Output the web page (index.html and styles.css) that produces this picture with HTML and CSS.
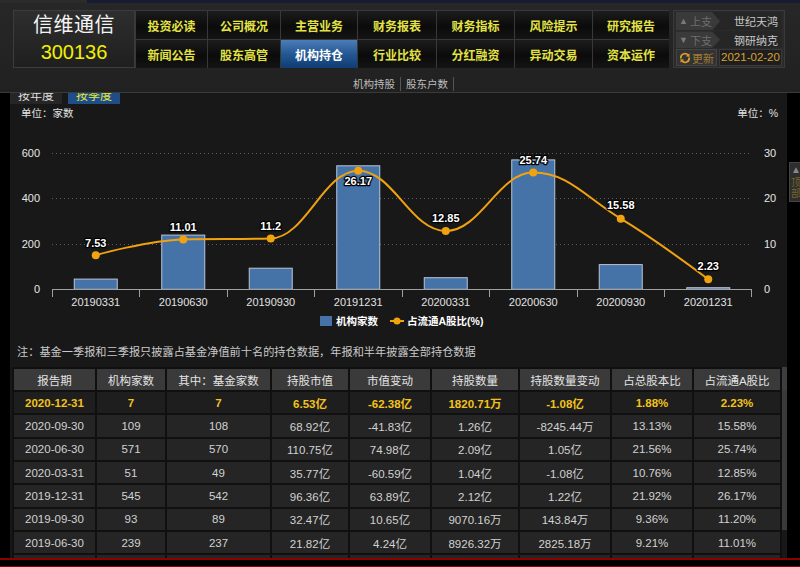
FILE: index.html
```html
<!DOCTYPE html>
<html lang="zh-CN">
<head>
<meta charset="utf-8">
<title>信维通信 300136 机构持仓</title>
<link rel="stylesheet" href="styles.css">
</head>
<body>
<div class="topstrip"></div>
<header class="hdr">
  <div class="hdr-row">
    <div class="logo">
      <div class="name">信维通信</div>
      <div class="code">300136</div>
    </div>
    <nav class="nav">
      <a class="cell">投资必读</a>
      <a class="cell">公司概况</a>
      <a class="cell">主营业务</a>
      <a class="cell">财务报表</a>
      <a class="cell">财务指标</a>
      <a class="cell">风险提示</a>
      <a class="cell">研究报告</a>
      <a class="cell">新闻公告</a>
      <a class="cell">股东高管</a>
      <a class="cell active">机构持仓</a>
      <a class="cell">行业比较</a>
      <a class="cell">分红融资</a>
      <a class="cell">异动交易</a>
      <a class="cell">资本运作</a>
    </nav>
    <div class="side">
      <div class="srow">
        <span class="lab"><span class="tri">▲</span>上支</span>
        <span class="val">世纪天鸿</span>
      </div>
      <div class="srow">
        <span class="lab"><span class="tri">▼</span>下支</span>
        <span class="val">钢研纳克</span>
      </div>
      <div class="srow upd">
        <span class="ulab">
          <svg class="ricon" width="12" height="12" viewBox="0 0 12 12"><path d="M2 6.5A4 4 0 0 1 9.2 3.4" fill="none" stroke="#d99a2b" stroke-width="1.8"/><path d="M10.6 1.2 10.4 5 6.8 4.2Z" fill="#d99a2b"/><path d="M10 5.5A4 4 0 0 1 2.8 8.6" fill="none" stroke="#d99a2b" stroke-width="1.8"/><path d="M1.4 10.8 1.6 7 5.2 7.8Z" fill="#d99a2b"/></svg>更新</span>
        <span class="date">2021-02-20</span>
      </div>
    </div>
  </div>
  <div class="subnav">
    <span class="sn">机构持股</span><span class="sn">股东户数</span>
  </div>
</header>
<div class="wrap">
  <div class="lbar"></div>
  <main class="main">
    <div class="tabs">
      <span class="tab">按年度</span>
      <span class="tab on">按季度</span>
    </div>
    <div class="units"><span>单位：家数</span><span>单位：%</span></div>
    <svg class="chart" width="777" height="218" viewBox="10 122 777 218">
      <g class="grid">
        <line x1="52" y1="153.5" x2="751" y2="153.5"/>
        <line x1="52" y1="198.5" x2="751" y2="198.5"/>
        <line x1="52" y1="244.5" x2="751" y2="244.5"/>
      </g>
      <g class="ylab">
        <text x="40" y="157" text-anchor="end">600</text>
        <text x="40" y="202" text-anchor="end">400</text>
        <text x="40" y="248" text-anchor="end">200</text>
        <text x="40" y="293" text-anchor="end">0</text>
        <text x="764" y="157">30</text>
        <text x="764" y="202">20</text>
        <text x="764" y="248">10</text>
        <text x="764" y="293">0</text>
      </g>
      <g class="bars">
        <rect x="74.25" y="279.1" width="43" height="10.2"/>
        <rect x="161.75" y="235.1" width="43" height="54.2"/>
        <rect x="249.25" y="268.2" width="43" height="21.1"/>
        <rect x="336.75" y="165.8" width="43" height="123.5"/>
        <rect x="424.25" y="277.7" width="43" height="11.6"/>
        <rect x="511.75" y="159.9" width="43" height="129.4"/>
        <rect x="599.25" y="264.6" width="43" height="24.7"/>
        <rect x="686.75" y="287.7" width="43" height="1.6"/>
      </g>
      <g class="axis">
        <line x1="52" y1="289.5" x2="752" y2="289.5"/>
        <line x1="52.5" y1="289.5" x2="52.5" y2="297"/>
        <line x1="139.5" y1="289.5" x2="139.5" y2="297"/>
        <line x1="227.5" y1="289.5" x2="227.5" y2="297"/>
        <line x1="314.5" y1="289.5" x2="314.5" y2="297"/>
        <line x1="402.5" y1="289.5" x2="402.5" y2="297"/>
        <line x1="489.5" y1="289.5" x2="489.5" y2="297"/>
        <line x1="577.5" y1="289.5" x2="577.5" y2="297"/>
        <line x1="664.5" y1="289.5" x2="664.5" y2="297"/>
        <line x1="751.5" y1="289.5" x2="751.5" y2="297"/>
      </g>
      <g class="xlab">
        <text x="95.75" y="306">20190331</text>
        <text x="183.25" y="306">20190630</text>
        <text x="270.75" y="306">20190930</text>
        <text x="358.25" y="306">20191231</text>
        <text x="445.75" y="306">20200331</text>
        <text x="533.25" y="306">20200630</text>
        <text x="620.75" y="306">20200930</text>
        <text x="708.25" y="306">20201231</text>
      </g>
      <path class="line" d="M95.75 255.2C95.75 255.2 148.25 240.3 183.25 239.4C218.25 238.5 235.75 239.4 270.75 238.5C305.75 237.6 323.25 170.7 358.25 170.7C393.25 170.7 410.75 231 445.75 231C480.75 231 498.25 172.6 533.25 172.6C568.25 172.6 585.75 197.38 620.75 218.7C655.75 240.02 708.25 279.2 708.25 279.2"/>
      <g class="dots">
        <circle cx="95.75" cy="255.2" r="4"/>
        <circle cx="183.25" cy="239.4" r="4"/>
        <circle cx="270.75" cy="238.5" r="4"/>
        <circle cx="358.25" cy="170.7" r="4"/>
        <circle cx="445.75" cy="231" r="4"/>
        <circle cx="533.25" cy="172.6" r="4"/>
        <circle cx="620.75" cy="218.7" r="4"/>
        <circle cx="708.25" cy="279.2" r="4"/>
      </g>
      <g class="dlab">
        <text x="95.75" y="246.5">7.53</text>
        <text x="183.25" y="230.5">11.01</text>
        <text x="270.75" y="230">11.2</text>
        <text x="358.25" y="184.5">26.17</text>
        <text x="445.75" y="222">12.85</text>
        <text x="533.25" y="164">25.74</text>
        <text x="620.75" y="209">15.58</text>
        <text x="708.25" y="269.5">2.23</text>
      </g>
      <g class="legend">
        <rect x="320" y="316" width="12" height="10"/>
        <text x="336" y="325">机构家数</text>
        <line x1="390" y1="321" x2="404" y2="321"/>
        <circle cx="397" cy="321" r="3.5"/>
        <text x="407" y="325">占流通A股比(%)</text>
      </g>
    </svg>
    <p class="note">注：基金一季报和三季报只披露占基金净值前十名的持仓数据，年报和半年披露全部持仓数据</p>
    <div class="tblwrap">
      <table class="tbl">
        <colgroup>
          <col style="width:83px"><col style="width:70px"><col style="width:105px"><col style="width:78px"><col style="width:82px"><col style="width:88px"><col style="width:92px"><col style="width:82px"><col style="width:88px">
        </colgroup>
        <thead>
          <tr><th>报告期</th><th>机构家数</th><th>其中：基金家数</th><th>持股市值</th><th>市值变动</th><th>持股数量</th><th>持股数量变动</th><th>占总股本比</th><th>占流通A股比</th></tr>
        </thead>
        <tbody>
          <tr class="hl"><td>2020-12-31</td><td>7</td><td>7</td><td>6.53亿</td><td>-62.38亿</td><td>1820.71万</td><td>-1.08亿</td><td>1.88%</td><td>2.23%</td></tr>
          <tr><td>2020-09-30</td><td>109</td><td>108</td><td>68.92亿</td><td>-41.83亿</td><td>1.26亿</td><td>-8245.44万</td><td>13.13%</td><td>15.58%</td></tr>
          <tr><td>2020-06-30</td><td>571</td><td>570</td><td>110.75亿</td><td>74.98亿</td><td>2.09亿</td><td>1.05亿</td><td>21.56%</td><td>25.74%</td></tr>
          <tr><td>2020-03-31</td><td>51</td><td>49</td><td>35.77亿</td><td>-60.59亿</td><td>1.04亿</td><td>-1.08亿</td><td>10.76%</td><td>12.85%</td></tr>
          <tr><td>2019-12-31</td><td>545</td><td>542</td><td>96.36亿</td><td>63.89亿</td><td>2.12亿</td><td>1.22亿</td><td>21.92%</td><td>26.17%</td></tr>
          <tr><td>2019-09-30</td><td>93</td><td>89</td><td>32.47亿</td><td>10.65亿</td><td>9070.16万</td><td>143.84万</td><td>9.36%</td><td>11.20%</td></tr>
          <tr><td>2019-06-30</td><td>239</td><td>237</td><td>21.82亿</td><td>4.24亿</td><td>8926.32万</td><td>2825.18万</td><td>9.21%</td><td>11.01%</td></tr>
          <tr><td>2019-03-31</td><td>45</td><td>43</td><td>7.83亿</td><td>-1.36亿</td><td>3203.52万</td><td>-5862.45万</td><td>3.31%</td><td>7.53%</td></tr>
        </tbody>
      </table>
      <div class="scroll"><div class="sh"></div><div class="thumb"></div></div>
    </div>
  </main>
  <div class="rbar">
    <div class="totop"><span class="arr">▲</span><span class="tt">顶部</span></div>
  </div>
</div>
<div class="foot"></div>
</body>
</html>
```

FILE: styles.css
```css
html, body {
  margin: 0;
  padding: 0;
}
body {
  width: 800px;
  height: 567px;
  overflow: hidden;
  background: #000;
  font-family: "Liberation Sans", "Noto Sans CJK SC", sans-serif;
}
.topstrip {
  height: 3px;
  background: linear-gradient(to right, #2b2b2b 87px, #171b33 87px);
}
.hdr {
  height: 90px;
  box-sizing: border-box;
  background: linear-gradient(#272727, #212121);
  border-bottom: 1px solid #3a3a3a;
}
.hdr-row {
  display: flex;
  padding: 7px 0 0 13px;
  height: 58px;
}
.logo {
  width: 122px;
  height: 58px;
  box-sizing: border-box;
  border: 1px solid #3c3c3c;
  background: linear-gradient(#2e2e2e, #1f1f1f);
  display: flex;
  flex-direction: column;
  align-items: center;
  justify-content: center;
}
.logo .name {
  font-size: 20px;
  line-height: 27px;
  color: #f4f4f4;
  letter-spacing: 0.5px;
}
.logo .code {
  font-size: 20px;
  line-height: 27px;
  color: #f2f000;
}
.nav {
  display: grid;
  grid-template-columns: 72px 73px 77px 79px 78px 78px 77px;
  grid-template-rows: 29px 29px;
  height: 58px;
}
.cell {
  display: flex;
  align-items: center;
  justify-content: center;
  box-sizing: border-box;
  border-left: 1px solid #383838;
  border-top: 1px solid #383838;
  background: linear-gradient(#1c1c1c, #0b0b0b 55%, #141414);
  color: #e3e346;
  font-size: 12px;
  font-weight: bold;
}
.cell.active {
  background: linear-gradient(#4c7db9, #235894 50%, #0f3c74);
  color: #ffffff;
}
.side {
  margin-left: 4px;
  width: 112px;
  height: 58px;
  box-sizing: border-box;
  border: 1px solid #3a3a3a;
  background: #2b2b2b;
  padding: 1px 2px;
  display: flex;
  flex-direction: column;
  gap: 1px;
}
.srow {
  display: flex;
  align-items: center;
  justify-content: space-between;
  height: 18px;
  background: #262626;
}
.srow:first-child {
  height: 20px;
}
.lab {
  display: flex;
  align-items: center;
  width: 44px;
  height: 100%;
  padding-left: 3px;
  box-sizing: border-box;
  background: #3a3a3a;
  clip-path: polygon(0 0, 82% 0, 100% 50%, 82% 100%, 0 100%);
  color: #6d6d6d;
  font-size: 11px;
}
.tri {
  font-size: 9px;
  color: #7a7a7a;
  margin-right: 2px;
}
.val {
  color: #c6c6c6;
  font-size: 11px;
  padding-right: 4px;
}
.upd {
  height: 17px;
  background: #2b2b2b;
  gap: 2px;
}
.ulab {
  display: flex;
  align-items: center;
  gap: 1px;
  height: 100%;
  padding: 0 2px;
  background: #333;
  border: 1px solid #444;
  box-sizing: border-box;
  color: #a27b34;
  font-size: 11px;
}
.ricon {
  display: block;
}
.date {
  flex: 1;
  height: 100%;
  box-sizing: border-box;
  background: #1e1e1e;
  border: 1px solid #3a3a3a;
  color: #dba134;
  font-size: 11.5px;
  line-height: 15px;
  text-align: center;
}
.subnav {
  display: flex;
  justify-content: center;
  margin-top: 9px;
  height: 14px;
  padding-left: 2px;
}
.sn {
  font-size: 10.5px;
  line-height: 14px;
  color: #bdbdbd;
  padding: 0 5px;
  border-right: 1px solid #555;
}
.wrap {
  display: flex;
  height: 465px;
  overflow: hidden;
}
.lbar {
  width: 10px;
  background: #000;
}
.main {
  width: 777px;
  background: #181818;
  overflow: hidden;
}
.rbar {
  width: 13px;
  background: #000;
  position: relative;
}
.totop {
  position: absolute;
  top: 69px;
  left: 2px;
  width: 20px;
  height: 40px;
  box-sizing: border-box;
  background: #2e2e2e;
  border: 1px solid #444;
  display: flex;
  flex-direction: column;
  align-items: flex-start;
  padding-left: 1px;
}
.totop .arr {
  color: #888;
  font-size: 10px;
  line-height: 14px;
}
.totop .tt {
  color: #7b6428;
  font-size: 10px;
  line-height: 11px;
  width: 10px;
}
.tabs {
  display: flex;
  height: 11px;
  overflow: hidden;
}
.tab {
  display: block;
  width: 52px;
  text-align: center;
  font-size: 12px;
  line-height: 7px;
  color: #dedede;
  background: #262626;
}
.tab.on {
  margin-left: 6px;
  background: #1f4d88;
  color: #e6e632;
}
.units {
  display: flex;
  justify-content: space-between;
  height: 18px;
  line-height: 18px;
  padding: 0 9px 0 11px;
  font-size: 10.5px;
  color: #e0e0e0;
}
.chart {
  display: block;
  font-family: "Liberation Sans", "Noto Sans CJK SC", sans-serif;
}
.grid line {
  stroke: #5a5a5a;
  stroke-width: 1;
  stroke-dasharray: 1 3;
}
.ylab text {
  font-size: 11px;
  fill: #e6e6e6;
}
.bars rect {
  fill: #4572a7;
  stroke: #b9c6d8;
  stroke-width: 1;
}
.axis line {
  stroke: #a0a0a0;
  stroke-width: 1;
}
.xlab text {
  font-size: 11px;
  fill: #e2e2e2;
  text-anchor: middle;
}
.line {
  fill: none;
  stroke: #f0a30f;
  stroke-width: 2;
}
.dots circle {
  fill: #f0a30f;
}
.dlab text {
  font-size: 11px;
  font-weight: bold;
  fill: #ffffff;
  text-anchor: middle;
  stroke: #000;
  stroke-width: 2.5;
  stroke-linejoin: round;
  paint-order: stroke;
}
.legend rect {
  fill: #4572a7;
}
.legend line {
  stroke: #f0a30f;
  stroke-width: 2;
}
.legend circle {
  fill: #f0a30f;
}
.legend text {
  font-size: 10.5px;
  font-weight: bold;
  fill: #ffffff;
}
.note {
  margin: 0 0 3px;
  padding-left: 7px;
  height: 24px;
  line-height: 24px;
  font-size: 11.2px;
  color: #c9c9c9;
  white-space: nowrap;
}
.tblwrap {
  display: flex;
  margin-left: 2px;
}
.tbl {
  width: 768px;
  table-layout: fixed;
  border-collapse: collapse;
}
.tbl th,
.tbl td {
  border: 2px solid #101010;
  padding: 0;
  text-align: center;
  white-space: nowrap;
  overflow: hidden;
}
.tbl th {
  height: 21px;
  background: #3a3a3a;
  color: #e4e4e4;
  font-size: 11.5px;
  font-weight: normal;
}
.tbl td {
  height: 21.33px;
  background: #252525;
  color: #d2d2d2;
  font-size: 11.5px;
}
.tbl tr.hl td {
  background: #1e1e1e;
  color: #f3c21b;
  font-weight: bold;
}
.scroll {
  width: 7px;
  display: flex;
  flex-direction: column;
}
.scroll .sh {
  height: 23px;
  background: #3e3e3e;
}
.scroll .thumb {
  height: 140px;
  background: #3a3a3a;
}
.foot {
  height: 9px;
  box-sizing: border-box;
  border-top: 2px solid #8c0000;
  border-bottom: 1px solid #8c0000;
  background: #000;
}
```
